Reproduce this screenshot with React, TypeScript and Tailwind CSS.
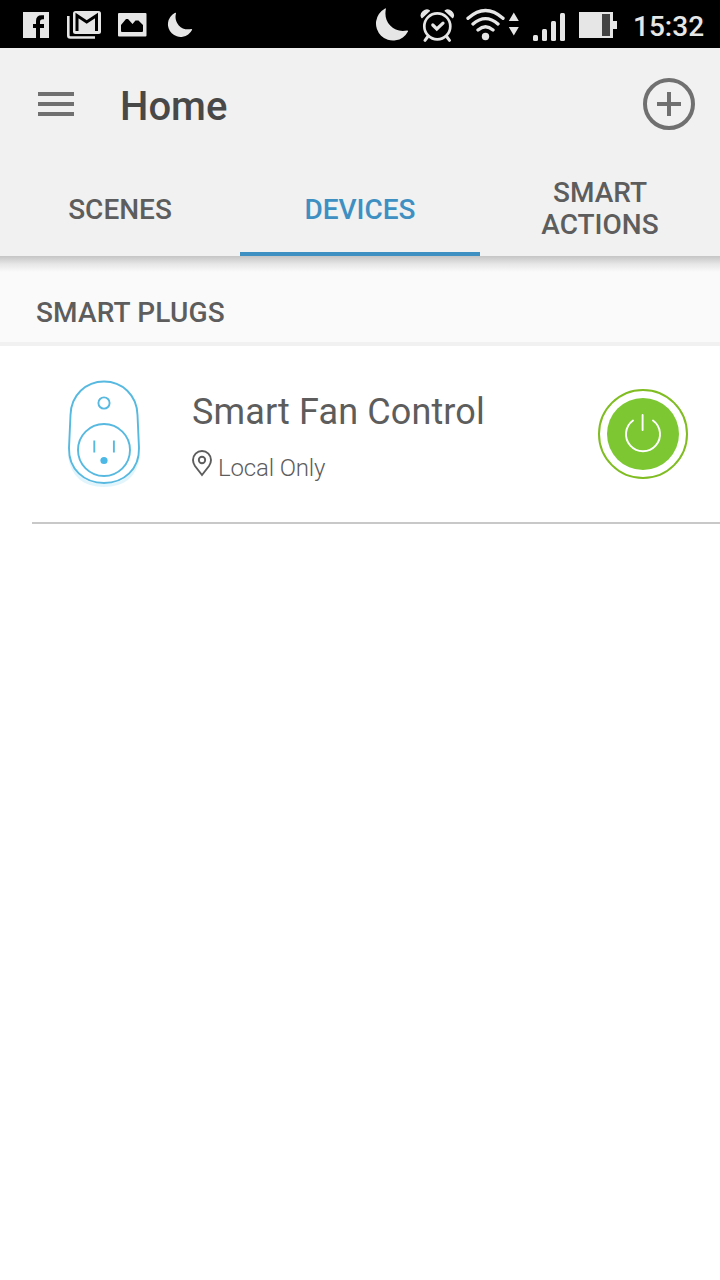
import React from "react";

function StatusBar() {
  return (
    <div className="flex h-12 items-center bg-black text-[#e6e6e6]">
      <svg className="ml-[23px] h-12 w-[26px]" viewBox="23 0 26 48" fill="currentColor">
        <path d="M23 12h26v26h-9V28h4v-4h-4v-2q0-2.800 2.800-2.800H44v-4h-2.500Q36 15.200 36 21v3h-3v4h3v10H23z" />
      </svg>
      <svg className="ml-[18px] h-12 w-[34px]" viewBox="67 0 34 48" fill="none" stroke="currentColor">
        <path d="M68.300 16v19.500q0 2 2 2H95" strokeWidth="2.600" />
        <rect x="73" y="11" width="28" height="23" rx="2.500" fill="currentColor" stroke="none" />
        <path d="M77 31V15.500l9.700 6.500 9.800-6.500V31" stroke="#000" strokeWidth="3" />
      </svg>
      <svg className="ml-[17px] h-12 w-[29px]" viewBox="118 0 29 48" fill="currentColor">
        <rect x="118" y="13" width="28.500" height="23.500" rx="1" />
        <path d="M121 31v-6l5-6h2l4.500 5 3-3.500h3l4.500 4.500v6q0 1-1 1h-20q-1 0-1-1z" fill="#000" />
      </svg>
      <svg className="ml-5 h-12 w-[26px]" viewBox="167 0 26 48" fill="currentColor">
        <path d="M176 13.200q-1.800 7.200 2.800 12.200 4.600 5 12.500 3.600 1.200-.1.700.900A12.700 12.700 0 1 1 174.700 13q1.600-.6 1.300.2z" />
      </svg>
      <svg className="ml-auto h-12 w-[36px]" viewBox="374 0 36 48" fill="currentColor">
        <path d="M385.900 8.700q-2 10.300 4.300 16.800 6.500 7 17 5 1.200 0 .8 1A17 17 0 1 1 384.700 8.700q1.400-1 1.200 0z" />
      </svg>
      <svg className="ml-[10px] h-12 w-[36px]" viewBox="420 0 36 48" fill="none" stroke="currentColor" strokeLinecap="round">
        <circle cx="437.300" cy="26.300" r="13" strokeWidth="2.700" />
        <path d="M427.500 37l-2.500 3.300M447 37l2.500 3.300" strokeWidth="3" />
        <path d="M432.800 25l4 4 6.200-5.800" strokeWidth="3.200" />
        <path d="M422 17.500q-2-3 1.300-6 3.200-2.500 6-.7zM452.600 17.500q2-3-1.300-6-3.200-2.500-6-.7z" strokeWidth="1.500" strokeLinejoin="round" fill="currentColor" />
      </svg>
      <svg className="ml-[10px] h-12 w-[54px]" viewBox="466 0 54 48" fill="none" stroke="currentColor" strokeLinecap="round">
        <path d="M468 18.300q17.500-15.600 35 0M473 24q12.500-10.800 25 0M478 30q7.500-6.400 15 0" strokeWidth="3.300" />
        <circle cx="485.500" cy="36.500" r="3.700" fill="currentColor" stroke="none" />
        <path d="M508.800 21l5-8.600 5 8.600zM508.800 27l5 8.600 5-8.600z" fill="currentColor" stroke="none" />
      </svg>
      <svg className="ml-[13px] h-12 w-8" viewBox="533 0 32 48" fill="currentColor">
        <rect x="533" y="35" width="5" height="6" rx="1.500" />
        <rect x="542" y="29" width="5" height="12" rx="1.500" />
        <rect x="551" y="21" width="5" height="20" rx="1.500" />
        <rect x="560" y="13" width="5" height="28" rx="1.500" />
      </svg>
      <svg className="ml-[14px] h-12 w-[38px]" viewBox="579 0 38 48" fill="currentColor">
        <path d="M579 12h34v9h4v8h-4v9h-34z" />
        <path d="M602 14h8v22h-8z" fill="#444" />
      </svg>
      <span className="ml-[16px] mr-4 w-[71px] pt-[5px] text-[28px] font-medium leading-[43px]">15:32</span>
    </div>
  );
}

function PlugIcon() {
  return (
    <svg className="h-[112px] w-[80px]" viewBox="64 376 80 112" fill="none" stroke="#57b9e0" strokeWidth="1.900">
      <path d="M69.500 457C73 477 86 485.500 104 485.500S135 477 138.500 457" stroke="#e3f5fc" strokeWidth="3" />
      <path
        d="M70.500 415C71 395 86 381.500 104 381.500S137 395 137.500 415L139 448C139.500 469 124 483 104 483S68.500 469 69 448Z"
        fill="#fff"
      />
      <circle cx="104" cy="403" r="5.600" />
      <circle cx="104" cy="450" r="26" />
      <path d="M94.300 440.500v12M113.900 440.500v12" />
      <circle cx="104" cy="460.500" r="3.600" fill="#4cb8e6" stroke="none" />
    </svg>
  );
}

function PowerButton() {
  return (
    <button aria-label="Power" className="ml-auto mr-8 h-[90px] w-[90px]">
      <svg className="h-[90px] w-[90px]" viewBox="598 389 90 90" fill="none">
        <circle cx="643" cy="434" r="44" stroke="#80bd22" strokeWidth="2" />
        <circle cx="643" cy="434" r="36" fill="#7dc832" />
        <path d="M642.600 415v15M633 420.500A17 17 0 1 0 653 420.500" stroke="#fff" strokeWidth="1.900" strokeLinecap="round" />
      </svg>
    </button>
  );
}

export default function App() {
  return (
    <div className="flex h-[1280px] w-[720px] flex-col overflow-hidden bg-white font-['Roboto',sans-serif] text-[#5d5d5d]">
      <StatusBar />
      <header className="h-[208px] bg-[#f1f1f1]">
        <div className="flex h-[112px] items-center pl-[38px] pr-[25px]">
          <button aria-label="Menu" className="flex w-9 flex-col gap-[6px]">
            <span className="h-1 bg-[#707070]" />
            <span className="h-1 bg-[#707070]" />
            <span className="h-1 bg-[#707070]" />
          </button>
          <h1 className="ml-[46px] pt-[5px] text-[40px] font-medium leading-[47px] text-[#484848]">Home</h1>
          <button aria-label="Add" className="ml-auto">
            <svg className="h-[52px] w-[52px]" viewBox="0 0 52 52" fill="none" stroke="#707070" strokeWidth="4">
              <circle cx="26" cy="26" r="24" />
              <path d="M26 14v24M14 26h24" />
            </svg>
          </button>
        </div>
        <nav className="grid h-24 grid-cols-3 text-center text-[28px] font-medium leading-8">
          <button className="flex items-center justify-center pt-1">SCENES</button>
          <button className="flex items-center justify-center border-b-4 border-[#3f90c2] pt-2 text-[#3f90c2]">DEVICES</button>
          <button className="flex items-center justify-center px-10 pt-0.5">SMART ACTIONS</button>
        </nav>
      </header>
      <section>
        <div className="h-[90px] border-b-4 border-[#f1f1f1] bg-[#fafafa]">
          <div className="h-4 bg-linear-to-b from-[#c5c5c5] via-[#e6e6e6] to-[#fafafa]" />
          <h2 className="pl-9 pt-[25px] text-[28px] font-medium leading-8 tracking-[0.17px]">SMART PLUGS</h2>
        </div>
        <div className="ml-8 flex h-[178px] items-start border-b-2 border-[#c8c8c8]">
          <div className="ml-8 mt-[30px] h-[112px] w-20">
            <PlugIcon />
          </div>
          <div className="ml-12 mt-11">
            <p className="text-[36px] leading-[44px] tracking-[0.12px]">Smart Fan Control</p>
            <div className="mt-[15px] flex items-start">
              <svg className="h-7 w-5" viewBox="192 449 20 28" fill="none" stroke="#5d5d5d" strokeWidth="1.900">
                <path d="M202 475L195 466Q193 463 193 460A9 9 0 0 1 211 460Q211 463 209 466Z" />
                <circle cx="202" cy="460" r="3.200" />
              </svg>
              <span className="ml-[6px] pt-[3px] text-[24px] font-light leading-8 tracking-[-0.15px]">Local Only</span>
            </div>
          </div>
          <div className="ml-auto mt-[43px]">
            <PowerButton />
          </div>
        </div>
      </section>
    </div>
  );
}
